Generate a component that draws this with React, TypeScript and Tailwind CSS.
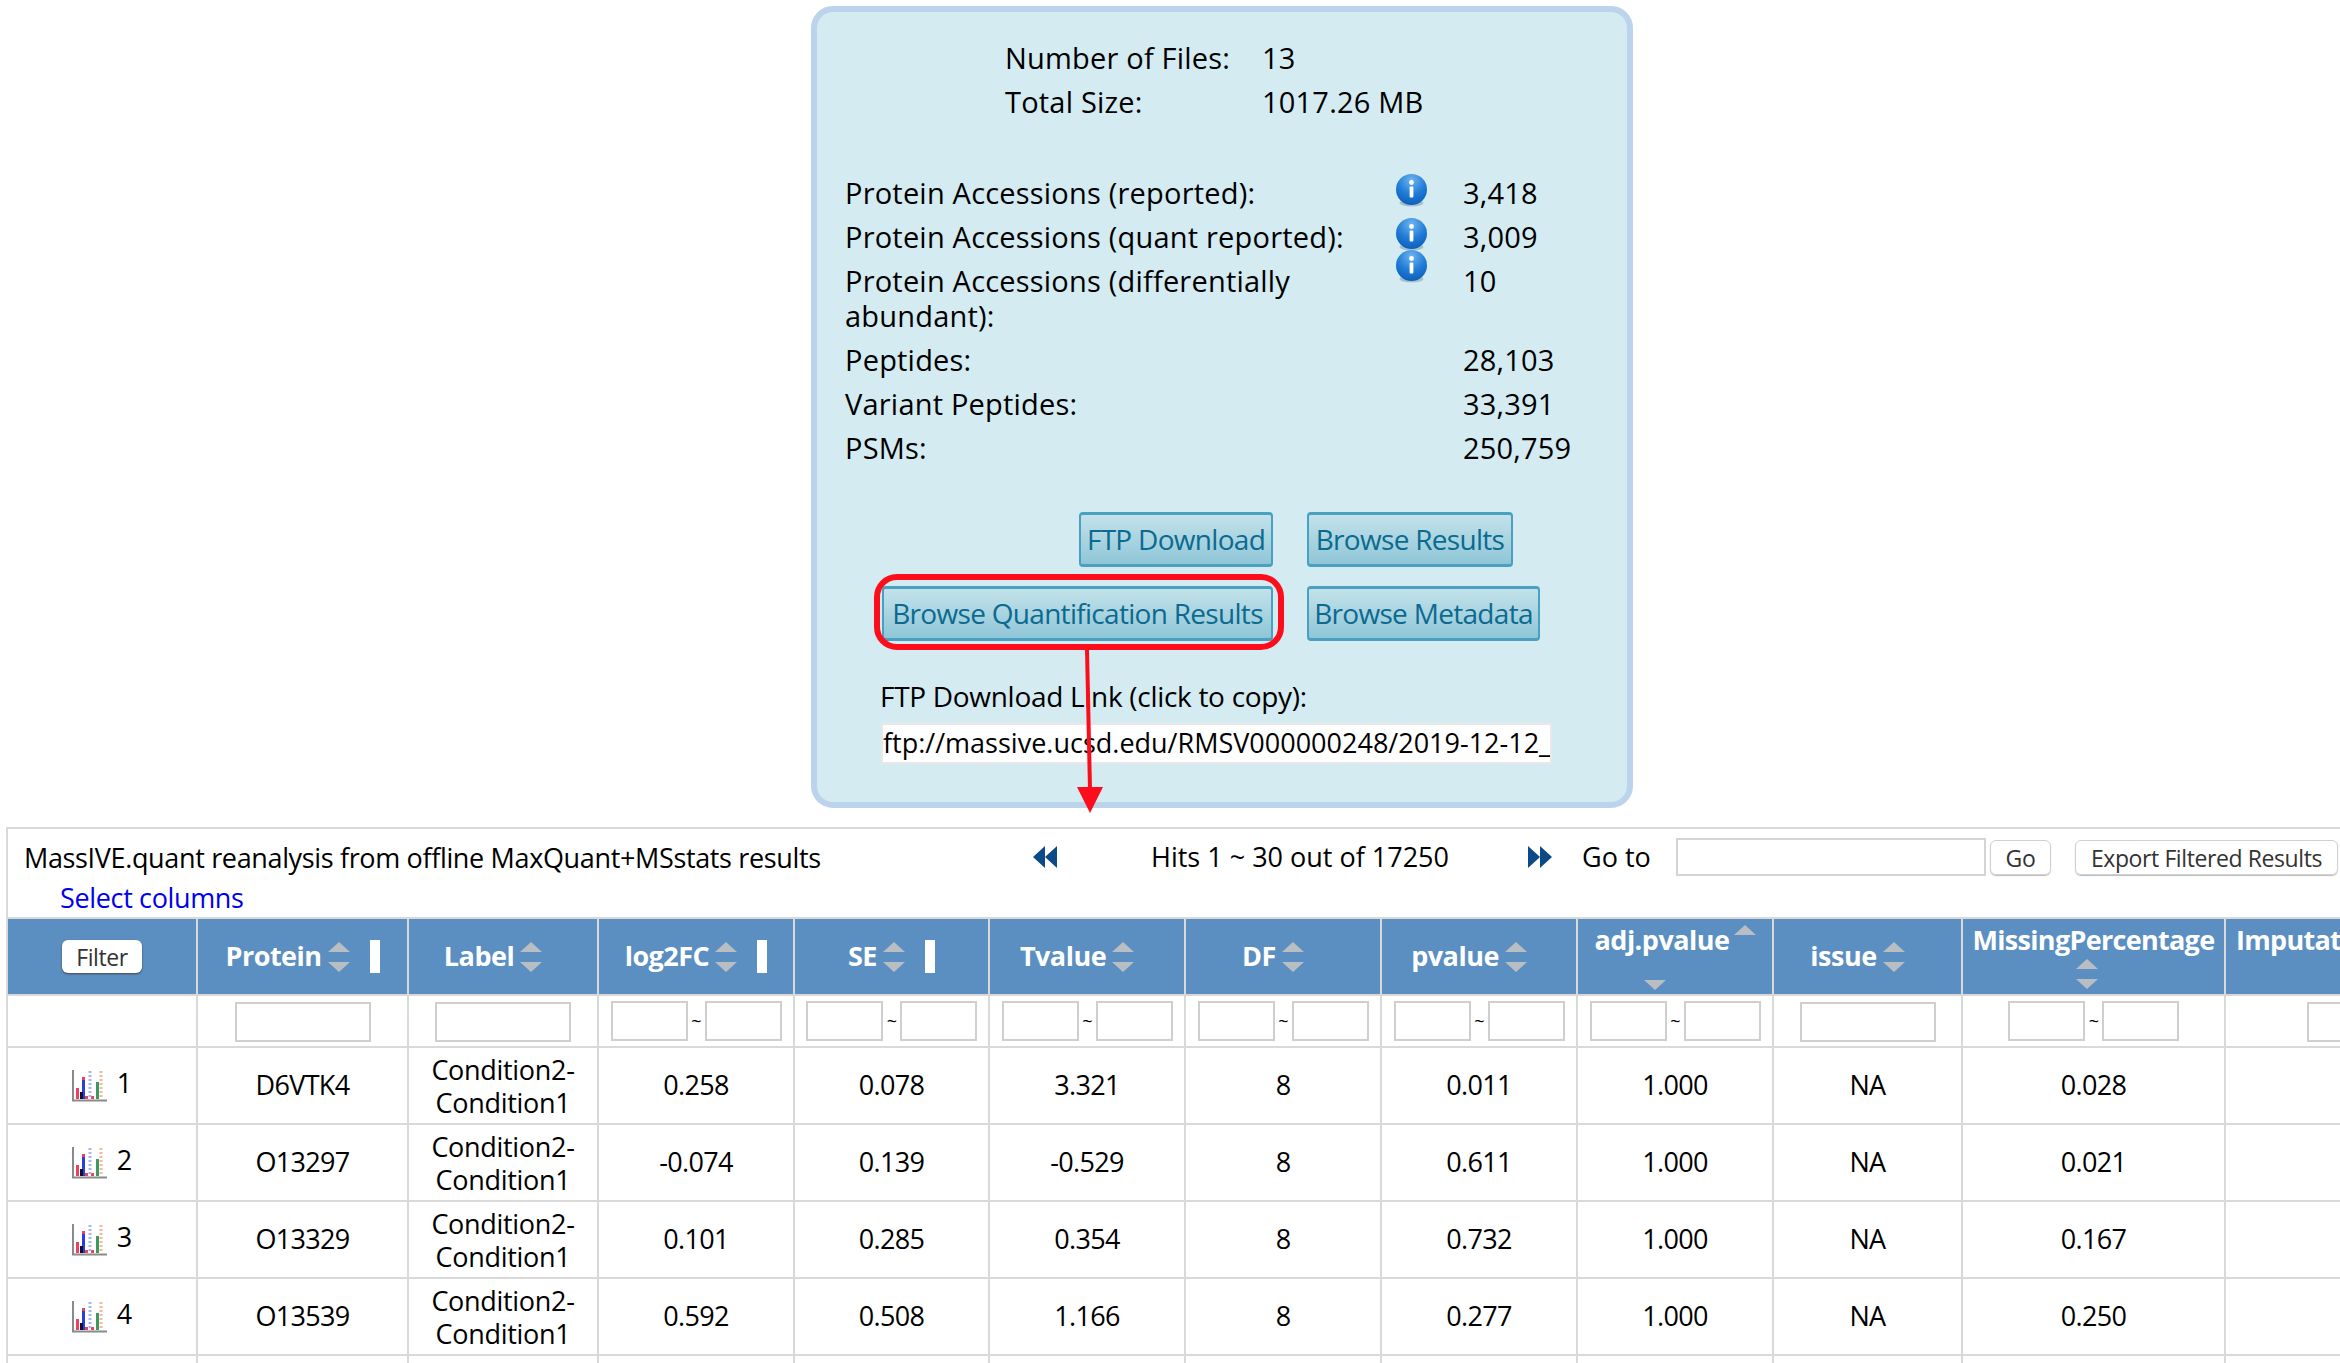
const WIDTHS = [190, 211, 190, 196, 195, 196, 196, 196, 196, 189, 263, 300]

const ROWS = [
  ['1', 'D6VTK4', '0.258', '0.078', '3.321', '8', '0.011', '1.000', 'NA', '0.028'],
  ['2', 'O13297', '-0.074', '0.139', '-0.529', '8', '0.611', '1.000', 'NA', '0.021'],
  ['3', 'O13329', '0.101', '0.285', '0.354', '8', '0.732', '1.000', 'NA', '0.167'],
  ['4', 'O13539', '0.592', '0.508', '1.166', '8', '0.277', '1.000', 'NA', '0.250'],
]

function InfoIcon({ className = '' }: { className?: string }) {
  return (
    <svg width="33" height="33" viewBox="0 0 33 33" className={className} aria-hidden>
      <defs>
        <radialGradient id="infoBlue" cx="50%" cy="20%" r="85%">
          <stop offset="0%" stopColor="#6fb4ee" />
          <stop offset="55%" stopColor="#1f7bd6" />
          <stop offset="100%" stopColor="#0b5cb8" />
        </radialGradient>
      </defs>
      <ellipse cx="16.5" cy="29" rx="12" ry="3.5" fill="#8aa3ad" opacity="0.6" />
      <circle cx="16.5" cy="15.5" r="15.5" fill="url(#infoBlue)" />
      <circle cx="16.5" cy="8.5" r="2.4" fill="#fff" />
      <rect x="14.6" y="12.5" width="3.8" height="11" rx="1" fill="#fff" />
    </svg>
  )
}

function ChartIcon() {
  return (
    <svg width="36" height="32" viewBox="0 0 36 32" className="shrink-0" aria-hidden>
      <rect x="0" y="0" width="2" height="31" fill="#8a8a8a" />
      <rect x="0" y="29.5" width="35" height="2" fill="#8a8a8a" />
      <rect x="4" y="18" width="3" height="11" fill="#f0405a" />
      <rect x="10" y="8" width="3" height="21" fill="#2b3fe0" />
      <rect x="10" y="7" width="3" height="3" fill="#f0405a" />
      <rect x="8" y="22" width="3" height="7" fill="#101030" />
      <rect x="13" y="26" width="3" height="3" fill="#f0405a" />
      <rect x="24" y="12" width="3" height="17" fill="#3c9a60" />
      <rect x="19" y="26" width="3" height="3" fill="#f0405a" />
      <line x1="18" y1="1" x2="18" y2="29" stroke="#a9b4f5" strokeWidth="3" strokeDasharray="2 2" />
      <line x1="29" y1="1" x2="29" y2="29" stroke="#f8b898" strokeWidth="3" strokeDasharray="2 2" />
    </svg>
  )
}

function SortUp() {
  return (
    <svg width="22" height="10" viewBox="0 0 22 10" className="block" aria-hidden>
      <polygon points="11,0 22,10 0,10" fill="#b9bec3" />
    </svg>
  )
}

function SortDown() {
  return (
    <svg width="22" height="10" viewBox="0 0 22 10" className="block" aria-hidden>
      <polygon points="0,0 22,0 11,10" fill="#b9bec3" />
    </svg>
  )
}

function SortArrows() {
  return (
    <div className="flex shrink-0 flex-col gap-[10px]">
      <SortUp />
      <SortDown />
    </div>
  )
}

function DoubleArrow({ flip = false }: { flip?: boolean }) {
  return (
    <svg width="24" height="22" viewBox="0 0 24 22" className={flip ? 'rotate-180' : ''} aria-hidden>
      <polygon points="12,0 12,22 0,11" fill="#0b4a86" />
      <polygon points="24,0 24,22 12,11" fill="#0b4a86" />
    </svg>
  )
}

function HeaderLabel({ label, handle = false }: { label: string; handle?: boolean }) {
  return (
    <th className="border-2 border-[#d9d9d9] bg-[#5b8fc1] p-0 font-bold tracking-[-0.5px] text-white">
      <div className={`flex items-center justify-center gap-[6px] ${handle ? '' : 'pr-[20px]'}`}>
        <span>{label}</span>
        <SortArrows />
        {handle && <span className="ml-[14px] h-[33px] w-[10px] bg-white" />}
      </div>
    </th>
  )
}

function RangeFilter() {
  return (
    <td className="border-2 border-[#d9d9d9] p-0">
      <div className="flex items-center justify-center gap-[2px] text-[18px]">
        <input className="h-[40px] w-[77px] border-2 border-[#cfcfcf] bg-white" />
        <span className="w-[13px] text-center">~</span>
        <input className="h-[40px] w-[77px] border-2 border-[#cfcfcf] bg-white" />
      </div>
    </td>
  )
}

function TextFilter() {
  return (
    <td className="border-2 border-[#d9d9d9] p-0 text-center">
      <input className="h-[40px] w-[136px] border-2 border-[#cfcfcf] bg-white align-middle" />
    </td>
  )
}

function SummaryRow({ label, value, icon, iconClass }: { label: string; value: string; icon?: boolean; iconClass?: string }) {
  return (
    <div className="grid grid-cols-[550px_68px_1fr]">
      <div className="w-[525px] py-[4.5px]">{label}</div>
      <div className="flex justify-start">{icon && <InfoIcon className={iconClass} />}</div>
      <div className="py-[4.5px]">{value}</div>
    </div>
  )
}

function PanelButton({ label, className = '' }: { label: string; className?: string }) {
  return (
    <button
      type="button"
      className={`h-[55px] rounded-[4px] border-2 border-t-[3px] border-b-[3px] border-[#4aa0c0] bg-gradient-to-b from-[#c3e2ea] to-[#8fc6d7] text-center text-[28px] tracking-[-0.7px] text-[#0b6a90] ${className}`}
    >
      {label}
    </button>
  )
}

export default function App() {
  return (
    <div className="relative h-[1363px] w-[2340px] overflow-hidden bg-white font-['Open_Sans',sans-serif] text-[27px] tracking-[-0.7px] text-black">
      {/* Summary panel */}
      <div className="ml-[811px] mt-[6px] h-[802px] w-[822px] rounded-[22px] border-[6px] border-[#bcd3ec] bg-[#d4ebf2] pt-[23px] leading-[35px]">
        <div className="ml-[188px] grid grid-cols-[257px_1fr] text-[29px] tracking-[0.2px]">
          <div className="py-[4.5px]">Number of Files:</div>
          <div className="py-[4.5px]">13</div>
          <div className="py-[4.5px]">Total Size:</div>
          <div className="py-[4.5px]">1017.26 MB</div>
        </div>

        <div className="ml-[28px] mt-[47px] text-[29px] tracking-[0.2px]">
          <SummaryRow label="Protein Accessions (reported):" value="3,418" icon iconClass="mt-[4px]" />
          <SummaryRow label="Protein Accessions (quant reported):" value="3,009" icon iconClass="mt-[4px]" />
          <SummaryRow label="Protein Accessions (differentially abundant):" value="10" icon iconClass="-mt-[8px]" />
          <SummaryRow label="Peptides:" value="28,103" />
          <SummaryRow label="Variant Peptides:" value="33,391" />
          <SummaryRow label="PSMs:" value="250,759" />
        </div>

        <div className="ml-[262px] mt-[43px] flex gap-[34px]">
          <PanelButton label="FTP Download" className="w-[194px]" />
          <PanelButton label="Browse Results" className="w-[206px]" />
        </div>
        <div className="ml-[65px] mt-[19px] flex gap-[34px]">
          <PanelButton label="Browse Quantification Results" className="w-[391px]" />
          <PanelButton label="Browse Metadata" className="w-[233px]" />
        </div>

        <div className="ml-[63px] mt-[38px] text-[28px] tracking-[-0.3px]">FTP Download Link (click to copy):</div>
        <div className="ml-[64px] mt-[9px] h-[41px] w-[671px] overflow-hidden whitespace-nowrap border-2 border-[#e8e8e8] bg-white leading-[36px] tracking-normal">
          ftp://massive.ucsd.edu/RMSV000000248/2019-12-12_
        </div>
      </div>

      {/* Red call-out from the button to the results table */}
      <svg width="2340" height="1363" viewBox="0 0 2340 1363" className="pointer-events-none absolute left-0 top-0" aria-hidden>
        <rect x="877" y="577" width="404" height="70" rx="20" fill="none" stroke="#fb0d1b" strokeWidth="6" />
        <line x1="1087" y1="649" x2="1090" y2="790" stroke="#fb0d1b" strokeWidth="4" />
        <polygon points="1077,787 1103,787 1090,813" fill="#fb0d1b" />
      </svg>

      {/* Results table */}
      <div className="ml-[6px] mt-[19px] border-t-2 border-[#d9d9d9]">
        <div className="flex h-[88px] border-l-2 border-[#d9d9d9]">
          <div className="w-[1025px] shrink-0 pl-[16px] pt-[9px] leading-[40px] tracking-[-0.35px]">
            <div>MassIVE.quant reanalysis from offline MaxQuant+MSstats results</div>
            <div className="pl-[36px] text-[#0000ee]">Select columns</div>
          </div>
          <div className="flex h-[54px] items-center pt-[2px] tracking-normal">
            <DoubleArrow />
            <span className="ml-[94px] w-[377px]">Hits 1 ~ 30 out of 17250</span>
            <DoubleArrow flip />
            <span className="ml-[30px] w-[94px]">Go to</span>
            <input className="h-[38px] w-[310px] border-2 border-[#d4d4d4] bg-white" />
            <button type="button" className="ml-[4px] h-[35px] w-[61px] rounded-[6px] border border-[#d0d0d0] text-[23px] tracking-[-0.4px] text-[#333] shadow-[0_1px_1px_#bbb]">Go</button>
            <button type="button" className="ml-[24px] h-[35px] w-[263px] rounded-[6px] border border-[#d0d0d0] text-[23px] tracking-[-0.4px] text-[#333] shadow-[0_1px_1px_#bbb]">Export Filtered Results</button>
          </div>
        </div>

        <table className="table-fixed border-collapse" style={{ width: WIDTHS.reduce((a, b) => a + b, 0) }}>
          <colgroup>
            {WIDTHS.map((w, i) => (
              <col key={i} style={{ width: w }} />
            ))}
          </colgroup>
          <thead>
            <tr className="h-[77px]">
              <th className="border-2 border-[#d9d9d9] bg-[#5b8fc1] p-0 text-center">
                <button type="button" className="h-[33px] w-[80px] rounded-[6px] bg-white text-[23px] font-normal tracking-[-0.4px] text-[#333] shadow-[0_1px_2px_#444]">Filter</button>
              </th>
              <HeaderLabel label="Protein" handle />
              <HeaderLabel label="Label" />
              <HeaderLabel label="log2FC" handle />
              <HeaderLabel label="SE" handle />
              <HeaderLabel label="Tvalue" />
              <HeaderLabel label="DF" />
              <HeaderLabel label="pvalue" />
              <th className="border-2 border-[#d9d9d9] bg-[#5b8fc1] p-0 font-bold leading-[30px] tracking-[-0.5px] text-white">
                <div className="flex h-[75px] flex-col items-center">
                  <div className="flex items-start gap-[4px] pt-[6px]">
                    <span>adj.pvalue</span>
                    <SortUp />
                  </div>
                  <div className="mt-auto pb-[4px] pr-[40px]">
                    <SortDown />
                  </div>
                </div>
              </th>
              <HeaderLabel label="issue" />
              <th className="border-2 border-[#d9d9d9] bg-[#5b8fc1] p-0 font-bold leading-[30px] text-white">
                <div className="flex h-[75px] flex-col items-center pt-[6px]">
                  <span>MissingPercentage</span>
                  <div className="mt-[4px] pr-[14px]"><SortArrows /></div>
                </div>
              </th>
              <th className="border-2 border-[#d9d9d9] bg-[#5b8fc1] p-0 text-left align-top font-bold leading-[30px] text-white">
                <div className="whitespace-nowrap pl-[10px] pt-[6px]">ImputationPercentage</div>
              </th>
            </tr>
          </thead>
          <tbody>
            <tr className="h-[52px]">
              <td className="border-2 border-[#d9d9d9] p-0" />
              <TextFilter />
              <TextFilter />
              <RangeFilter />
              <RangeFilter />
              <RangeFilter />
              <RangeFilter />
              <RangeFilter />
              <RangeFilter />
              <TextFilter />
              <RangeFilter />
              <TextFilter />
            </tr>
            {ROWS.map((row) => (
              <tr key={row[0]} className="h-[77px] text-center">
                <td className="border-2 border-[#d9d9d9] p-0">
                  <div className="flex items-center justify-center gap-[8px]">
                    <ChartIcon />
                    <span className="-mt-[4px] w-[16px]">{row[0]}</span>
                  </div>
                </td>
                <td className="border-2 border-[#d9d9d9] p-0">{row[1]}</td>
                <td className="border-2 border-[#d9d9d9] p-0 leading-[33px] tracking-[-0.3px]">
                  Condition2-
                  <br />
                  Condition1
                </td>
                {row.slice(2).map((cell, i) => (
                  <td key={i} className="border-2 border-[#d9d9d9] p-0">{cell}</td>
                ))}
                <td className="border-2 border-[#d9d9d9] p-0" />
              </tr>
            ))}
            <tr className="h-[77px]">
              {WIDTHS.map((_, i) => (
                <td key={i} className="border-2 border-[#d9d9d9] p-0" />
              ))}
            </tr>
          </tbody>
        </table>
      </div>
    </div>
  )
}
